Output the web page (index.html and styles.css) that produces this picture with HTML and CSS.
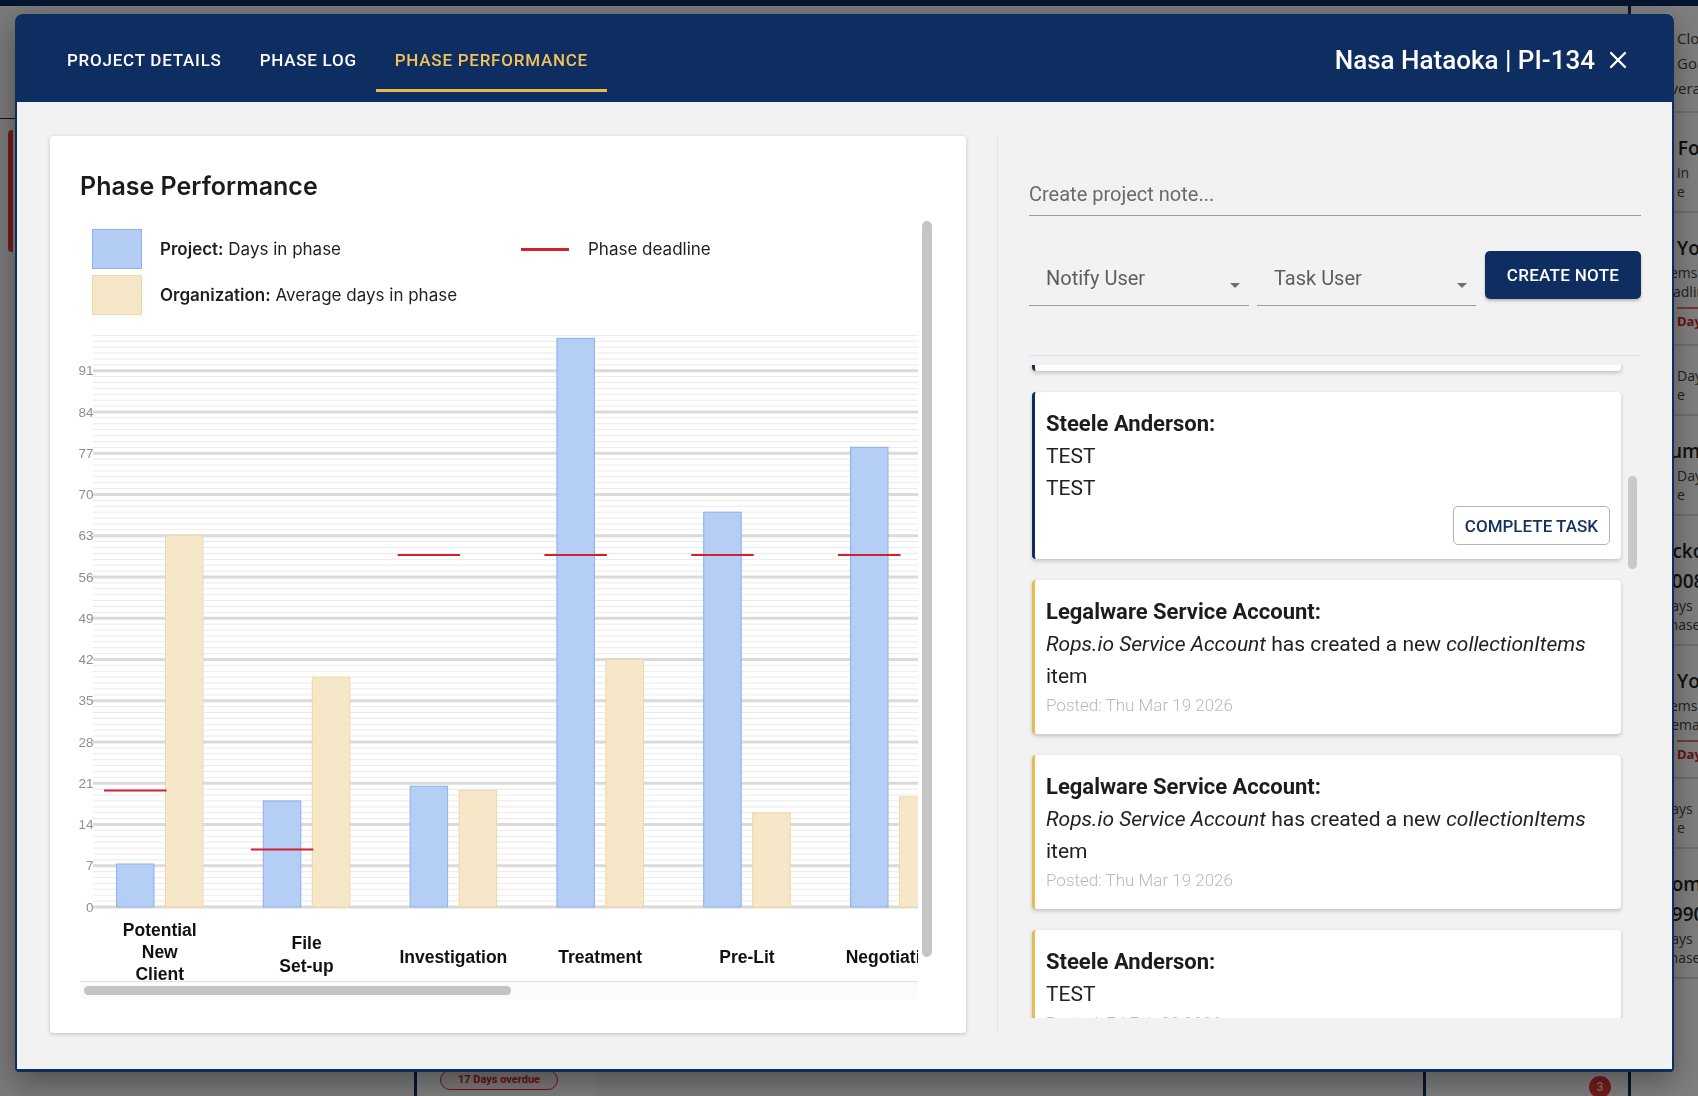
FILE: index.html
```html
<!DOCTYPE html>
<html lang="en">
  <head>
    <meta charset="UTF-8" />
    <title>Phase Performance</title>
    <link rel="stylesheet" href="styles.css">
  </head>
  <body>
    <!-- board behind the dialog -->
    <div class="app">
      <div class="app-nav"></div>
      <div class="board">
        <div class="lane lane-a">
          <div class="rule"></div>
          <div class="ticket ticket-late"></div>
        </div>
        <div class="lane lane-b">
          <div class="ticket ticket-low">
            <span class="pill">17 Days overdue</span>
          </div>
        </div>
        <div class="lane lane-c">
          <div class="ticket ticket-low">
            <span class="badge">3</span>
          </div>
        </div>
        <div class="lane lane-d">
          <div class="side-card">
            <div class="ln">Closed</div>
            <div class="ln">Goal</div>
            <div class="ln cut">Average</div>
          </div>
          <div class="side-card">
            <div class="ln big cut2">In Focus</div>
            <div class="ln sm">in</div>
            <div class="ln sm">e</div>
          </div>
          <div class="side-card">
            <div class="ln big">Your</div>
            <div class="ln sm cut">Items:</div>
            <div class="ln sm cut2">Deadline</div>
            <div class="ln late">Days</div>
          </div>
          <div class="side-card">
            <div class="ln sm">Days</div>
            <div class="ln sm">e</div>
          </div>
          <div class="side-card">
            <div class="ln big cut2">Number</div>
            <div class="ln sm">Days</div>
            <div class="ln sm">e</div>
          </div>
          <div class="side-card">
            <div class="ln big cut2">Kickoff</div>
            <div class="ln big cut">2008</div>
            <div class="ln sm cut">Days</div>
            <div class="ln sm cut">phase</div>
          </div>
          <div class="side-card">
            <div class="ln big">You</div>
            <div class="ln sm cut">Items:</div>
            <div class="ln sm cut">Demand</div>
            <div class="ln late">Days</div>
          </div>
          <div class="side-card">
            <div class="ln sm cut">Days</div>
            <div class="ln sm">e</div>
          </div>
          <div class="side-card">
            <div class="ln big cut">Tommy</div>
            <div class="ln big cut">1990</div>
            <div class="ln sm cut">Days</div>
            <div class="ln sm cut">phase</div>
          </div>
        </div>
      </div>
    </div>
    <div class="backdrop"></div>

    <div class="modal">
      <div class="modal-head">
        <div class="tabs">
          <div class="tab">Project Details</div>
          <div class="tab">Phase Log</div>
          <div class="tab active">Phase Performance</div>
        </div>
        <div class="who">
          <span>Nasa Hataoka | PI-134</span>
          <svg class="close" width="18" height="18" viewBox="0 0 18 18">
            <path d="M2 2 L16 16 M16 2 L2 16" stroke="#fff" stroke-width="2.4" stroke-linecap="round" />
          </svg>
        </div>
      </div>

      <div class="modal-body">
        <div class="left">
          <div class="perf-card">
            <h2>Phase Performance</h2>
            <div class="chart-box">
              <div class="chart-main">
                <div class="legend">
                  <div class="key"><span class="swatch proj"></span><span><b>Project:</b> Days in phase</span></div>
                  <div class="key"><span class="dash"></span><span>Phase deadline</span></div>
                  <div class="key"><span class="swatch org"></span><span><b>Organization:</b> Average days in phase</span></div>
                </div>

                <svg class="plot" width="838" height="656" viewBox="0 0 838 656">
                  <defs>
                    <pattern id="minor" width="838" height="5.893" patternUnits="userSpaceOnUse" y="581.5">
                      <rect width="838" height="1" fill="#e9e9e9" />
                    </pattern>
                    <pattern id="major" width="838" height="41.25" patternUnits="userSpaceOnUse" y="580.5">
                      <rect width="838" height="3" fill="#dadada" />
                    </pattern>
                    <clipPath id="viewport">
                      <rect x="-20" y="0" width="858" height="656" />
                    </clipPath>
                  </defs>
                  <g clip-path="url(#viewport)">
                    <rect x="13" y="10" width="825" height="574" fill="url(#minor)" />
                    <rect x="13" y="39" width="825" height="546" fill="url(#major)" />

                    <g class="ticks">
                      <text x="13.5" y="582">0</text>
                      <text x="13.5" y="540.75">7</text>
                      <text x="13.5" y="499.5">14</text>
                      <text x="13.5" y="458.25">21</text>
                      <text x="13.5" y="417">28</text>
                      <text x="13.5" y="375.75">35</text>
                      <text x="13.5" y="334.5">42</text>
                      <text x="13.5" y="293.25">49</text>
                      <text x="13.5" y="252">56</text>
                      <text x="13.5" y="210.75">63</text>
                      <text x="13.5" y="169.5">70</text>
                      <text x="13.5" y="128.25">77</text>
                      <text x="13.5" y="87">84</text>
                      <text x="13.5" y="45.75">91</text>
                    </g>

                    <!-- project days vs organization average, one pair per phase -->
                    <rect class="bar-proj" x="36.5" y="539" width="37.5" height="43" />
                    <rect class="bar-org" x="85.5" y="210.7" width="37.5" height="371.3" />
                    <rect class="bar-proj" x="183.3" y="475.9" width="37.5" height="106.1" />
                    <rect class="bar-org" x="232.3" y="352.2" width="37.5" height="229.8" />
                    <rect class="bar-proj" x="330.1" y="461.2" width="37.5" height="120.8" />
                    <rect class="bar-org" x="379.1" y="465.3" width="37.5" height="116.7" />
                    <rect class="bar-proj" x="476.9" y="13.3" width="37.5" height="568.7" />
                    <rect class="bar-org" x="525.9" y="334.5" width="37.5" height="247.5" />
                    <rect class="bar-proj" x="623.7" y="187.2" width="37.5" height="394.8" />
                    <rect class="bar-org" x="672.7" y="487.7" width="37.5" height="94.3" />
                    <rect class="bar-proj" x="770.5" y="122.3" width="37.5" height="459.7" />
                    <rect class="bar-org" x="819.5" y="471.8" width="37.5" height="110.2" />

                    <g class="deadline">
                      <line x1="24" x2="86.5" y1="465.6" y2="465.6" />
                      <line x1="170.8" x2="233.3" y1="524.5" y2="524.5" />
                      <line x1="317.6" x2="380.1" y1="229.9" y2="229.9" />
                      <line x1="464.4" x2="526.9" y1="229.9" y2="229.9" />
                      <line x1="611.2" x2="673.7" y1="229.9" y2="229.9" />
                      <line x1="758" x2="820.5" y1="229.9" y2="229.9" />
                    </g>

                    <g class="cats">
                      <text x="79.75"><tspan x="79.75" y="605">Potential</tspan><tspan x="79.75" y="627.3">New</tspan><tspan x="79.75" y="649.3">Client</tspan></text>
                      <text x="226.55"><tspan x="226.55" y="618.3">File</tspan><tspan x="226.55" y="641">Set-up</tspan></text>
                      <text x="373.35" y="631.7">Investigation</text>
                      <text x="520.15" y="631.7">Treatment</text>
                      <text x="666.95" y="631.7">Pre-Lit</text>
                      <text x="813.75" y="631.7">Negotiation</text>
                    </g>
                  </g>
                </svg>

                <div class="hscroll"><div class="thumb"></div></div>
              </div>
              <div class="vscroll"><div class="thumb"></div></div>
            </div>
          </div>
        </div>

        <div class="split"></div>

        <div class="right">
          <input class="note-input" type="text" placeholder="Create project note..." />
          <div class="note-controls">
            <div class="select">Notify User</div>
            <div class="select">Task User</div>
            <button class="btn-create">Create Note</button>
          </div>
          <div class="divider"></div>

          <div class="notes">
            <div class="note-col">
              <div class="note task scrolled">
                <div class="note-who">Steele Anderson:</div>
                <div class="note-text">TEST</div>
                <div class="note-text">TEST</div>
                <button class="btn-done">Complete Task</button>
              </div>
              <div class="note task">
                <div class="note-who">Steele Anderson:</div>
                <div class="note-text">TEST</div>
                <div class="note-text">TEST</div>
                <button class="btn-done">Complete Task</button>
              </div>
              <div class="note">
                <div class="note-who">Legalware Service Account:</div>
                <div class="note-text"><i>Rops.io Service Account</i> has created a new <i>collectionItems</i> item</div>
                <div class="posted">Posted: Thu Mar 19 2026</div>
              </div>
              <div class="note">
                <div class="note-who">Legalware Service Account:</div>
                <div class="note-text"><i>Rops.io Service Account</i> has created a new <i>collectionItems</i> item</div>
                <div class="posted">Posted: Thu Mar 19 2026</div>
              </div>
              <div class="note">
                <div class="note-who">Steele Anderson:</div>
                <div class="note-text">TEST</div>
                <div class="posted">Posted: Fri Feb 20 2026</div>
              </div>
            </div>
            <div class="notes-bar"><div class="thumb"></div></div>
          </div>
        </div>
      </div>
    </div>
  </body>
</html>
```

FILE: styles.css
```css
* {
  box-sizing: border-box;
}
body {
  margin: 0;
  width: 1698px;
  height: 1096px;
  overflow: hidden;
  position: relative;
  background: #f5f5f5;
  font-family: Roboto, "Liberation Sans", sans-serif;
  color: #1d1d1d;
}

/* ---- board under the overlay ---- */
.app {
  height: 1096px;
  display: flex;
  flex-direction: column;
}
.app-nav {
  height: 6px;
  background: #0e2d60;
}
.board {
  flex: 1;
  display: flex;
  min-height: 0;
}
.lane {
  display: flex;
  flex-direction: column;
}
.lane-a {
  width: 380px;
  margin-left: 8px;
}
.rule {
  margin: 112px 0 0 -8px;
  width: 40px;
  height: 1px;
  background: #222;
}
.ticket {
  background: #fff;
  border-left: 3px solid #0e2d60;
}
.ticket-late {
  margin-top: 11px;
  height: 122px;
  border-left: 5px solid #e53935;
  border-radius: 4px 0 0 4px;
}
.lane-b {
  width: 182px;
  margin-left: 26px;
  justify-content: flex-end;
}
.ticket-low {
  height: 44px;
  padding: 16px 0 0 23px;
}
.pill {
  display: inline-block;
  width: 118px;
  height: 20px;
  border: 1.5px solid #d32f2f;
  border-radius: 10px;
  font-size: 11px;
  font-weight: 700;
  color: #c62828;
  text-align: center;
  line-height: 17px;
  background: #fdeeee;
}
.lane-c {
  width: 205px;
  margin-left: 827px;
  justify-content: flex-end;
}
.lane-c .ticket-low {
  padding: 24px 0 0 163px;
}
.badge {
  display: inline-block;
  width: 22px;
  height: 22px;
  border-radius: 50%;
  background: #e53935;
  color: #fff;
  font-size: 12px;
  text-align: center;
  line-height: 22px;
}
.lane-d {
  width: 70px;
  background: #fff;
  border-left: 3px solid #0e2d60;
  overflow: hidden;
}
.side-card {
  flex-shrink: 0;
  padding: 20px 0 10px 46px;
  border-bottom: 2px solid #ddd;
  font-family: "Open Sans", sans-serif;
  font-size: 15px;
  color: #444;
  white-space: nowrap;
}
.ln {
  line-height: 25px;
}
.ln.big {
  font-size: 19px;
  font-weight: 600;
  color: #222;
  line-height: 30px;
}
.ln.sm {
  font-size: 14px;
  line-height: 19px;
}
.ln.late {
  margin-top: 6px;
  border-top: 2px solid #e57373;
  color: #c62828;
  font-size: 13px;
  font-weight: 700;
}
.cut {
  margin-left: -16px;
}
.cut2 {
  margin-left: -22px;
}
.backdrop {
  position: fixed;
  inset: 0;
  background: rgba(0, 0, 0, 0.5);
}

/* ---- dialog ---- */
.modal {
  position: absolute;
  left: 15px;
  top: 14px;
  width: 1659px;
  height: 1058px;
  padding: 0 2px 3px;
  background: #0e2d60;
  border-radius: 8px 8px 4px 4px;
  display: flex;
  flex-direction: column;
  box-shadow: 0 10px 30px rgba(0, 0, 0, 0.35);
}
.modal-head {
  flex-shrink: 0;
  height: 88px;
  display: flex;
  align-items: flex-start;
  padding: 14px 45px 0 31px;
}
.tabs {
  display: flex;
}
.tab {
  height: 64px;
  line-height: 64px;
  padding: 0 19px;
  font-size: 17px;
  font-weight: 500;
  letter-spacing: 0.75px;
  text-transform: uppercase;
  color: #fff;
}
.tab.active {
  color: #f2c35c;
  box-shadow: inset 0 -3px 0 #e8b94b;
}
.who {
  margin-left: auto;
  height: 64px;
  display: flex;
  align-items: center;
  gap: 14px;
  font-size: 26px;
  font-weight: 500;
  color: #fff;
}
.close {
  display: block;
}
.modal-body {
  flex: 1;
  min-height: 0;
  overflow: hidden;
  background: #f2f2f3;
  display: grid;
  grid-template-columns: 980px 1px 1fr;
  grid-template-rows: 100%;
}

/* left: chart card */
.left {
  padding: 34px 31px 36px 33px;
  min-height: 0;
}
.perf-card {
  height: 100%;
  background: #fff;
  border-radius: 4px;
  box-shadow: 0 1px 4px rgba(0, 0, 0, 0.2);
  padding: 34px 34px 0 30px;
}
.perf-card h2 {
  margin: 0 0 19px;
  font-family: Inter, sans-serif;
  font-size: 25px;
  line-height: 32px;
  font-weight: 600;
  color: #1b1b1b;
}
.chart-box {
  display: flex;
  gap: 4px;
}
.chart-main {
  width: 838px;
}
.legend {
  display: grid;
  grid-template-columns: 429px auto;
  row-gap: 6px;
  padding: 8px 0 0 12px;
  font-family: Inter, sans-serif;
  font-size: 17px;
  color: #1f1f1f;
}
.legend b {
  font-weight: 600;
}
.key {
  height: 40px;
  display: flex;
  align-items: center;
  gap: 18px;
}
.swatch {
  width: 50px;
  height: 40px;
  border: 1px solid;
}
.swatch.proj {
  background: #b4cdf4;
  border-color: #8fb1ea;
}
.swatch.org {
  background: #f5e6c7;
  border-color: #efd8a6;
}
.dash {
  width: 48px;
  height: 3px;
  background: #d3202e;
  margin-right: 1px;
}
.plot {
  display: block;
  margin-top: 10px;
  overflow: visible;
}
.ticks text {
  font-family: "Liberation Sans", sans-serif;
  font-size: 13.5px;
  fill: #8e8e8e;
  text-anchor: end;
  dominant-baseline: central;
}
.bar-proj {
  fill: #b5cef5;
  stroke: #8eb0ea;
  stroke-width: 1;
}
.bar-org {
  fill: #f6e7c9;
  stroke: #f0d8a4;
  stroke-width: 1;
}
.deadline line {
  stroke: #d3202e;
  stroke-width: 2;
}
.cats text {
  font-family: "Liberation Sans", sans-serif;
  font-size: 17.5px;
  font-weight: 700;
  fill: #111;
  text-anchor: middle;
  dominant-baseline: central;
}
.hscroll {
  height: 18px;
  border-top: 1px solid #e3e3e3;
  background: #fbfbfb;
  padding: 4px 0 0 4px;
}
.hscroll .thumb {
  width: 427px;
  height: 9px;
  border-radius: 5px;
  background: #c3c3c3;
}
.vscroll {
  width: 10px;
}
.vscroll .thumb {
  height: 736px;
  border-radius: 5px;
  background: #c5c5c5;
}
.split {
  margin: 33px 0 35px;
  background: #e2e2e2;
}

/* right: notes */
.right {
  min-height: 0;
  padding: 68px 31px 51px;
  display: flex;
  flex-direction: column;
}
.note-input {
  display: block;
  flex-shrink: 0;
  width: 100%;
  height: 46px;
  padding: 10px 0 8px;
  border: none;
  border-bottom: 1px solid #9c9c9c;
  background: transparent;
  font-family: Roboto, sans-serif;
  font-size: 20px;
  line-height: 28px;
  outline: none;
}
.note-input::placeholder {
  color: #6b6b6b;
}
.note-controls {
  flex-shrink: 0;
  margin-top: 35px;
  display: flex;
  align-items: flex-start;
  gap: 8px;
}
.select {
  position: relative;
  width: 220px;
  height: 55px;
  padding-left: 17px;
  border-bottom: 1px solid #9c9c9c;
  display: flex;
  align-items: center;
  font-size: 20px;
  color: #5e5e5e;
}
.select + .select {
  width: 219px;
}
.select::after {
  content: "";
  position: absolute;
  right: 9px;
  top: 32px;
  border-left: 5px solid transparent;
  border-right: 5px solid transparent;
  border-top: 5px solid #6f6f6f;
}
.btn-create {
  margin-left: 1px;
  width: 156px;
  height: 48px;
  border: none;
  border-radius: 5px;
  background: #0e2d60;
  color: #fff;
  font-family: Roboto, sans-serif;
  font-size: 17px;
  font-weight: 500;
  letter-spacing: 0.3px;
  text-transform: uppercase;
  box-shadow: 0 2px 3px rgba(0, 0, 0, 0.25);
}
.divider {
  flex-shrink: 0;
  margin-top: 49px;
  height: 1px;
  background: #e0e0e0;
}
.notes {
  margin-top: 9px;
  flex: 1;
  min-height: 0;
  display: flex;
  gap: 7px;
  padding-left: 3px;
  overflow: hidden;
}
.note-col {
  width: 589px;
  display: flex;
  flex-direction: column;
  gap: 21px;
}
.note {
  flex-shrink: 0;
  display: flex;
  flex-direction: column;
  background: #fff;
  border-left: 3px solid #e6bd4f;
  border-radius: 4px;
  box-shadow: 0 2px 4px rgba(0, 0, 0, 0.2);
  padding: 16px 11px;
  font-family: Roboto, sans-serif;
}
.note.task {
  border-left-color: #0e2d60;
  padding-bottom: 14px;
}
.note.scrolled {
  margin-top: -161px;
}
.note-who {
  font-size: 22px;
  font-weight: 700;
  line-height: 32px;
  color: #1c1c1c;
}
.note-text {
  font-size: 21px;
  line-height: 32px;
  color: #222;
}
.posted {
  font-size: 17px;
  font-weight: 300;
  line-height: 26px;
  color: #b9b9b9;
}
.btn-done {
  align-self: flex-end;
  margin-top: 2px;
  height: 39px;
  padding: 0 11px;
  border: 1px solid #b3b3b3;
  border-radius: 5px;
  background: #fff;
  font-family: Roboto, sans-serif;
  font-size: 17px;
  font-weight: 500;
  text-transform: uppercase;
  color: #15305e;
}
.notes-bar {
  width: 9px;
}
.notes-bar .thumb {
  margin-top: 111px;
  height: 93px;
  border-radius: 5px;
  background: #c9c9c9;
}
```
